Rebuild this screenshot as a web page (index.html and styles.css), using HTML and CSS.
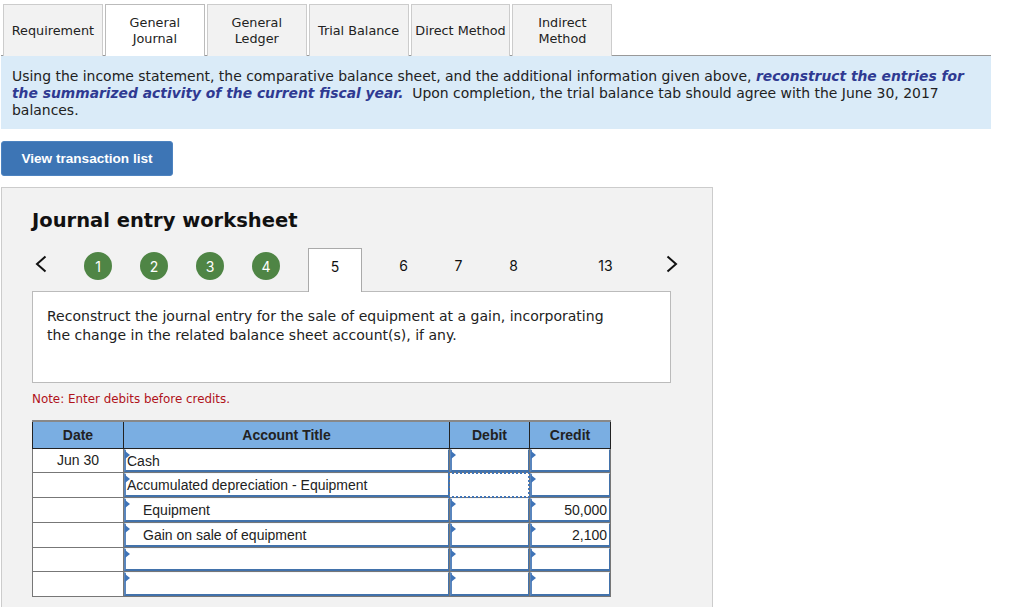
FILE: index.html
```html
<!DOCTYPE html>
<html lang="en">
<head>
<meta charset="utf-8">
<title>Journal entry worksheet</title>
<link rel="stylesheet" href="styles.css">
</head>
<body>
<div class="page">
  <nav class="tabs">
    <div class="tab">Requirement</div>
    <div class="tab active">General<br>Journal</div>
    <div class="tab">General<br>Ledger</div>
    <div class="tab">Trial Balance</div>
    <div class="tab">Direct Method</div>
    <div class="tab">Indirect<br>Method</div>
  </nav>
  <div class="banner">Using the income statement, the comparative balance sheet, and the additional information given above, <strong>reconstruct the entries for<br>the summarized activity of the current fiscal year.</strong>&nbsp; Upon completion, the trial balance tab should agree with the June 30, 2017<br>balances.</div>
  <button class="list-btn">View transaction list</button>
  <section class="panel">
    <h1 class="title">Journal entry worksheet</h1>
    <div class="steps">
      <svg class="chev chev-prev" width="12" height="18" viewBox="0 0 12 18"><path d="M10.5 1.5 2 9l8.500 7.500" fill="none" stroke="#111" stroke-width="2"/></svg>
      <span class="dot">1</span>
      <span class="dot">2</span>
      <span class="dot">3</span>
      <span class="dot">4</span>
      <span class="step-tab">5</span>
      <span class="num num-first">6</span>
      <span class="num">7</span>
      <span class="num">8</span>
      <span class="num num-last">13</span>
      <svg class="chev chev-next" width="12" height="18" viewBox="0 0 12 18"><path d="M1.500 1.500 10 9l-8.500 7.500" fill="none" stroke="#111" stroke-width="2"/></svg>
    </div>
    <div class="desc">Reconstruct the journal entry for the sale of equipment at a gain, incorporating<br>the change in the related balance sheet account(s), if any.</div>
    <p class="note">Note: Enter debits before credits.</p>
    <table class="journal">
      <thead>
        <tr><th class="c-date">Date</th><th class="c-title">Account Title</th><th class="c-debit">Debit</th><th class="c-credit">Credit</th></tr>
      </thead>
      <tbody>
        <tr><td class="date">Jun 30</td><td><div class="in">Cash</div></td><td><div class="in"></div></td><td><div class="in"></div></td></tr>
        <tr><td class="date"></td><td><div class="in">Accumulated depreciation - Equipment</div></td><td><div class="in focus"></div></td><td><div class="in"></div></td></tr>
        <tr><td class="date"></td><td><div class="in indent">Equipment</div></td><td><div class="in"></div></td><td><div class="in amt">50,000</div></td></tr>
        <tr><td class="date"></td><td><div class="in indent">Gain on sale of equipment</div></td><td><div class="in"></div></td><td><div class="in amt">2,100</div></td></tr>
        <tr><td class="date"></td><td><div class="in"></div></td><td><div class="in"></div></td><td><div class="in"></div></td></tr>
        <tr><td class="date"></td><td><div class="in"></div></td><td><div class="in"></div></td><td><div class="in"></div></td></tr>
      </tbody>
    </table>
  </section>
</div>
</body>
</html>
```
FILE: styles.css
```css
* { box-sizing: border-box; }
html, body { margin: 0; height: 607px; overflow: hidden; background: #fff; }
body { font-family: "DejaVu Sans", Verdana, sans-serif; color: #111; }
.page { width: 1024px; padding: 4px 0 0 1px; }

.tabs {
  display: flex;
  gap: 2px;
  width: 990px;
  height: 52px;
  padding-left: 2px;
  border-bottom: 1px solid #999;
}
.tab {
  width: 99.900px;
  height: 52px;
  display: flex;
  align-items: center;
  justify-content: center;
  text-align: center;
  font-size: 12.800px;
  line-height: 16px;
  white-space: nowrap;
  background: #f2f2f2;
  border: 1px solid #ccc;
  border-bottom: 0;
  color: #222;
}
.tab.active { background: #fff; border-color: #bbb; }

.banner {
  width: 990px;
  height: 73px;
  padding: 12px 11px 0;
  background: #daebf8;
  font-size: 13.950px;
  line-height: 17.200px;
  color: #222;
  white-space: nowrap;
}
.banner strong { color: #2f3a92; font-size: 13.850px; font-style: italic; font-weight: 700; }

.list-btn {
  display: block;
  width: 172px;
  height: 35px;
  margin: 12px 0 11px;
  padding: 0;
  border: 1px solid #4d83c0;
  border-radius: 3px;
  background: #3d75b5;
  color: #fff;
  font-family: "Liberation Sans", Arial, sans-serif;
  font-size: 13.600px;
  font-weight: 700;
}

.panel {
  width: 712px;
  height: 440px;
  padding: 21px 30px 0;
  background: #f2f2f2;
  border: 1px solid #ccc;
}
.title { margin: 0; font-size: 19.500px; line-height: 24px; font-weight: 700; color: #111; }

.steps {
  position: relative;
  z-index: 1;
  display: flex;
  align-items: flex-start;
  height: 44px;
  margin-top: 15px;
  margin-bottom: -1px;
  font-family: "Inter", "Liberation Sans", sans-serif;
  font-size: 14px;
}
.chev { flex: none; }
.chev-prev { margin: 7px 37px 0 3px; }
.dot {
  flex: none;
  width: 28px;
  height: 28px;
  margin-top: 4px;
  margin-right: 28px;
  border-radius: 50%;
  background: #4f8545;
  color: #fff;
  display: flex;
  align-items: center;
  justify-content: center;
}
.step-tab {
  flex: none;
  width: 54px;
  height: 44px;
  padding-top: 9px;
  background: #fff;
  border: 1px solid #aaa;
  border-bottom: 0;
  text-align: center;
  line-height: 17px;
}
.num { flex: none; width: 55px; padding-top: 9px; line-height: 17px; text-align: center; }
.num-first { margin-left: 14px; }
.num-last { margin-left: 37px; }
.chev-next { margin: 7px 0 0 33px; }

.desc {
  width: 639px;
  height: 92px;
  padding: 15px 14px 0;
  background: #fff;
  border: 1px solid #bbb;
  font-size: 14.030px;
  line-height: 19px;
  color: #222;
  white-space: nowrap;
}
.note { margin: 8px 0 13px; font-size: 11.900px; line-height: 16px; color: #b0121b; }

.journal {
  width: 578px;
  table-layout: fixed;
  border-collapse: collapse;
  font-family: "Liberation Sans", Arial, sans-serif;
  font-size: 14px;
  color: #222;
}
.journal th {
  height: 27px;
  padding: 0;
  background: #7aaee2;
  border: 1px solid #222;
  border-top: 2px solid #888;
  font-size: 14px;
  font-weight: 700;
}
.c-date { width: 91px; }
.c-title { width: 326px; }
.c-debit { width: 80px; }
.c-credit { width: 81px; }
.journal td {
  height: 24.700px;
  padding: 0;
  background: #fff;
  border: 1px solid #777;
}
.journal td.date { text-align: center; }
.in {
  position: relative;
  height: 23.700px;
  padding-left: 1px;
  line-height: 22px;
  border: 1px solid #f4f7fb;
  border-left: 2px solid #5a86bd;
  border-right: 1px solid #4272ab;
  border-bottom: 2px solid #4272ab;
  white-space: nowrap;
}
.in::before {
  content: "";
  position: absolute;
  left: -1px;
  top: 1px;
  border-left: 5px solid #3f74b8;
  border-top: 4px solid transparent;
  border-bottom: 4px solid transparent;
}
.in.indent { padding-left: 17px; }
.in.amt { padding-right: 2px; text-align: right; }
.in.focus { border: 2px dotted #3f74b8; margin: -1px -1px -1px -2px; height: 26px; }
.in.focus::before { display: none; }
```
